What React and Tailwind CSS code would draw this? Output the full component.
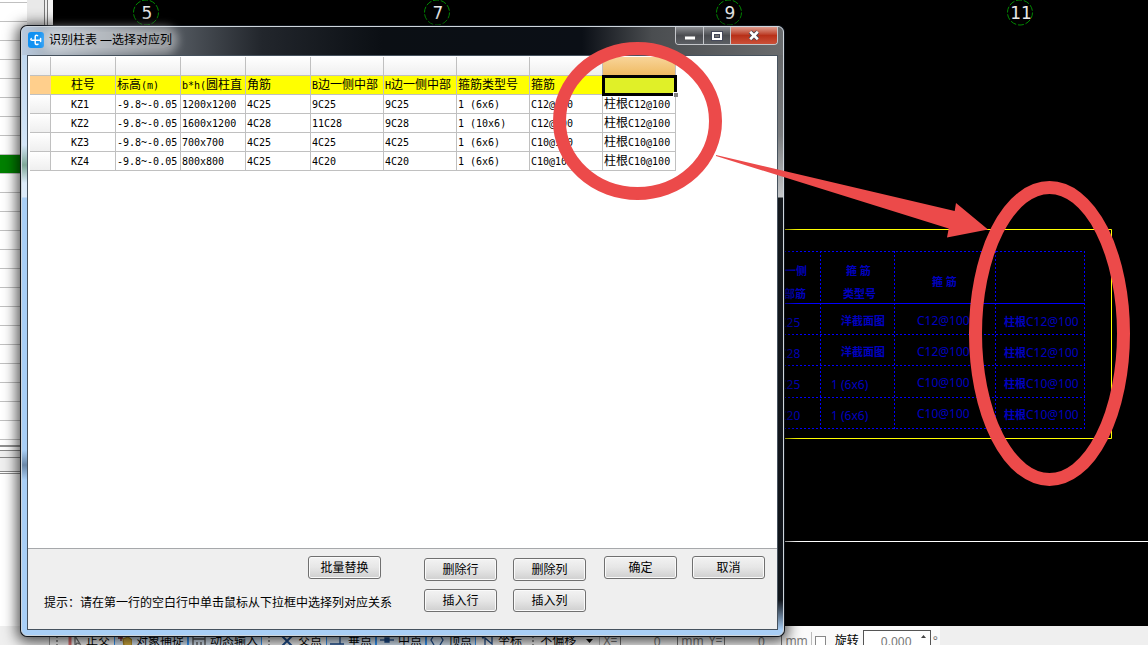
import { Fragment } from "react";
import clsx from "clsx";

const header = ["柱号", "标高(m)", "b*h(圆柱直", "角筋", "B边一侧中部", "H边一侧中部", "箍筋类型号", "箍筋", ""];

const rows = [
  ["KZ1", "-9.8~-0.05", "1200x1200", "4C25", "9C25", "9C25", "1 (6x6)", "C12@100", "柱根C12@100"],
  ["KZ2", "-9.8~-0.05", "1600x1200", "4C28", "11C28", "9C28", "1 (10x6)", "C12@100", "柱根C12@100"],
  ["KZ3", "-9.8~-0.05", "700x700", "4C25", "4C25", "4C25", "1 (6x6)", "C10@100", "柱根C10@100"],
  ["KZ4", "-9.8~-0.05", "800x800", "4C25", "4C20", "4C20", "1 (6x6)", "C10@100", "柱根C10@100"],
];

const axes = [
  { x: 146, label: "5" },
  { x: 437, label: "7" },
  { x: 729, label: "9" },
  { x: 1020, label: "11" },
];

const drawingRows = [
  { y: 326, left: "C25", type: "洋截面图", bar: "C12@100" },
  { y: 357, left: "C28", type: "洋截面图", bar: "C12@100" },
  { y: 388, left: "C25", type: "1 (6x6)", bar: "C10@100" },
  { y: 419, left: "C20", type: "1 (6x6)", bar: "C10@100" },
];

// latin runs are half the width of a chinese character, like in the old raster fonts
function GridText({ children }) {
  return children.split(/([\x20-\x7e]+)/).map((part, i) =>
    i % 2 ? (
      <span key={i} className="font-['DejaVu_Sans_Mono',monospace] text-[10px] leading-none">{part}</span>
    ) : (
      <Fragment key={i}>{part}</Fragment>
    )
  );
}

function ListPanel() {
  return (
    <aside className="flex w-[53px] shrink-0 flex-col bg-white">
      <div className="flex h-[450px]">
        <div className="flex w-[27px] flex-col overflow-hidden">
          <div className="h-[3px] shrink-0 border-b border-[#c0c0c0]" />
          {Array.from({ length: 23 }, (_, i) => (
            <div key={i} className={clsx("h-[19px] shrink-0 border-b border-[#c0c0c0]", i === 8 && "bg-[#008000]")} />
          ))}
          <div className="h-[7px] border-b-2 border-[#909090]" />
        </div>
        <div className="w-[17px] bg-[#e9e9e9]" />
        <div className="w-[4px] border-x border-[#777] bg-[#eee]" />
        <div className="flex-1 bg-[#f4f4f4]" />
      </div>
      <div className="h-[8px] border-y border-[#888] bg-[#efefef]" />
      <div className="h-[14px] border-b border-[#888] bg-[#efefef]" />
      <div className="h-[2px] border-b border-[#888]" />
    </aside>
  );
}

function Drawing() {
  return (
    <svg width="1095" height="626" viewBox="53 0 1095 626" className="shrink-0 font-['Noto_Sans','Noto_Sans_CJK_SC',sans-serif]">
      {axes.map((a) => (
        <g key={a.label}>
          <circle cx={a.x} cy="12.5" r="12.5" fill="none" stroke="#008a00" strokeDasharray="6 1.8" />
          <text x={a.x + 1} y="19" textAnchor="middle" fill="#e8e8e8" className="font-['DejaVu_Sans',sans-serif] text-[17px]">{a.label}</text>
        </g>
      ))}
      <path d="M700 229.5H1111.5V438.5H700" fill="none" stroke="#ffff00" />
      <path d="M700 541.5H1148" stroke="#ffffff" />
      <g stroke="#0000ff" strokeDasharray="2 2" fill="none">
        <path d="M700 251.5H1085M700 334.5H1085M700 365.5H1085M700 397.5H1085M700 428.5H1085" />
        <path d="M820.5 251V429M894.5 251V429M995.5 251V429M1084.5 251V429" />
      </g>
      <path d="M700 303.5H1085" stroke="#0000ff" />
      <g fill="#0000c0" className="text-[12px]">
        <g className="text-[11px] font-bold">
          <text x="785" y="275">一侧</text>
          <text x="784" y="298">部筋</text>
          <text x="846" y="275">箍 筋</text>
          <text x="843" y="298">类型号</text>
          <text x="932" y="286">箍 筋</text>
        </g>
        {drawingRows.map((r) => (
          <g key={r.y}>
            <text x="779" y={r.y + 1}>{r.left}</text>
            {r.type.startsWith("1") ? (
              <text x="831" y={r.y + 1}>{r.type}</text>
            ) : (
              <text x="841" y={r.y - 1} className="text-[11px] font-bold">{r.type}</text>
            )}
            <text x="917" y={r.y - 1}>{r.bar}</text>
            <text x="1004" y={r.y}>
              <tspan className="text-[11px] font-bold">柱根</tspan>
              {r.bar}
            </text>
          </g>
        ))}
      </g>
    </svg>
  );
}

function Grip() {
  return <span className="mx-[6px] h-[16px] border-l-2 border-dotted border-[#999]" />;
}

function SnapButton({ label, active, children }) {
  return (
    <button
      className={clsx(
        "flex h-[24px] shrink-0 items-center gap-[4px] border px-[3px] whitespace-nowrap",
        active ? "border-[#3399ff] bg-[#dcebfa]" : "border-transparent"
      )}
    >
      <svg width="14" height="14" viewBox="0 0 14 14" fill="none" stroke="#1d4f91" strokeWidth="1.3" aria-hidden="true">
        {children}
      </svg>
      {label}
    </button>
  );
}

function StatusBar() {
  return (
    <div className="h-[19px] shrink-0 overflow-hidden bg-[#efefef] pl-[49px]">
      <div className="flex h-[30px] w-[891px] items-center border-l border-[#999] bg-[#fafafa] text-[12px] text-black">
        <Grip />
        <SnapButton label="正交">
          <path d="M2 0V14" stroke="#e07070" strokeWidth="3" />
          <path d="M7 2V12L9 9L12 10Z" fill="#fff" stroke="#777" />
        </SnapButton>
        <SnapButton label="对象捕捉" active>
          <path d="M0 4H5M3 1V7" stroke="#802020" />
          <path d="M5 5L10 3L14 6V12H6Z" fill="#d8b040" stroke="#b08820" />
        </SnapButton>
        <SnapButton label="动态输入" active>
          <path d="M1 2H13V13H1ZM1 5H13M5 8V11M9 8V11" stroke="#555" />
        </SnapButton>
        <Grip />
        <SnapButton label="交点"><path d="M2 2L12 12M12 2L2 12" strokeWidth="2" /></SnapButton>
        <SnapButton label="垂点" active><path d="M10 1V10M0 10H14" /></SnapButton>
        <SnapButton label="中点" active>
          <path d="M0 6H14" />
          <path d="M5 4H9V8H5Z" fill="#1d4f91" />
        </SnapButton>
        <SnapButton label="顶点" active><path d="M4 1L1 6L4 11M10 1L13 6L10 11" /></SnapButton>
        <SnapButton label="坐标"><path d="M1 1L3 4L5 1M5 11V4L12 10V3" /></SnapButton>
        <Grip />
        <button className="flex items-center gap-[10px] whitespace-nowrap">
          不偏移
          <svg width="7" height="4" aria-hidden="true"><path d="M0 0H7L3.5 4Z" /></svg>
        </button>
        <div className="ml-auto flex shrink-0 items-center text-[#777]">
          <label htmlFor="offset-x" className="border-l border-[#bbb] px-[3px]">X=</label>
          <input id="offset-x" defaultValue="0" className="h-[24px] w-[58px] border border-[#777] pl-[16px] text-center" />
          <span className="mx-[3px]">mm</span>
          <label htmlFor="offset-y" className="px-[2px]">Y=</label>
          <input id="offset-y" defaultValue="0" className="h-[24px] w-[58px] border border-[#777] pl-[16px] text-center" />
          <span className="mx-[3px]">mm</span>
          <label className="flex items-center border-l border-[#bbb] pl-[3px] text-black">
            <input type="checkbox" className="mr-[9px] size-[11px] appearance-none border border-[#888] bg-white" />
            旋转
          </label>
          <span className="relative ml-[4px]">
            <input aria-label="旋转" defaultValue="0.000" className="h-[22px] w-[68px] border border-[#555] bg-white pl-[17px] text-left" />
            <svg width="5" height="3" className="absolute top-[5px] right-[5px]" aria-hidden="true"><path d="M0 3H5L2.5 0Z" fill="#444" /></svg>
          </span>
          <span className="mr-[2px] ml-[2px]">°</span>
        </div>
      </div>
    </div>
  );
}

function TitleBar() {
  return (
    <div className="flex h-[28px] items-start justify-between">
      <div className="flex items-center pt-[5px] pl-[6px]">
        <svg width="16" height="16" viewBox="0 0 16 16" aria-hidden="true">
          <rect width="16" height="16" rx="3" fill="#1191f2" />
          <path
            d="M9.6 3.6C8.2 2.8 7.2 3.6 7.2 5V11C7.2 12.6 8.8 13 10 12.2M3.2 6.6C2.4 7.6 3 8.2 4.4 8.2H12.6M12.6 6.6V9.6"
            fill="none"
            stroke="#fff"
            strokeWidth="1.5"
            strokeLinecap="round"
          />
        </svg>
        <h1 className="ml-[5px] rounded-full bg-white/40 text-[12px] leading-[16px] text-black shadow-[0_0_8px_6px_rgba(255,255,255,0.4)]">
          识别柱表 —选择对应列
        </h1>
      </div>
      <div className="mr-[5px] flex h-[18px] overflow-hidden rounded-b-[4px] border border-t-0 border-[#c4c6ca]">
        <button aria-label="最小化" className="flex w-[28px] items-center justify-center border-r border-[#c4c6ca] bg-linear-to-b from-[#8c8e92] via-[#4a4c50] via-50% to-[#5c5f64]">
          <svg width="12" height="12" viewBox="0 0 12 12" aria-hidden="true">
            <rect x="0.5" y="6" width="11" height="4" fill="#fff" stroke="#55565a" />
          </svg>
        </button>
        <button aria-label="最大化" className="flex w-[27px] items-center justify-center border-r border-[#c4c6ca] bg-linear-to-b from-[#8c8e92] via-[#4a4c50] via-50% to-[#5c5f64]">
          <svg width="12" height="10" viewBox="0 0 12 10" aria-hidden="true">
            <rect x="0.5" y="0.5" width="11" height="9" fill="#fff" stroke="#44485a" />
            <rect x="3.5" y="3.5" width="5" height="3" fill="#777" stroke="#44485a" />
          </svg>
        </button>
        <button aria-label="关闭" className="flex w-[46px] items-center justify-center bg-linear-to-b from-[#dc9a8c] via-[#b83018] via-50% to-[#cb5038]">
          <svg width="12" height="11" viewBox="0 0 12 11" aria-hidden="true">
            <path d="M2.2 1.8L9.8 9.2M9.8 1.8L2.2 9.2" stroke="#4a4450" strokeWidth="4.4" />
            <path d="M2.2 1.8L9.8 9.2M9.8 1.8L2.2 9.2" stroke="#fff" strokeWidth="2.6" />
          </svg>
        </button>
      </div>
    </div>
  );
}

function ColumnGrid() {
  return (
    <div className="h-[493px] border-b border-[#a6a8ab] bg-white pt-px pl-[2px]">
      <table className="w-[646px] table-fixed border-separate border-spacing-0 text-[12px] leading-[16px] text-black">
        <colgroup>
          <col className="w-[21px]" />
          {header.map((_, i) => (
            <col key={i} className={i < 4 ? "w-[65px]" : "w-[73px]"} />
          ))}
        </colgroup>
        <thead>
          <tr className="h-[19px]">
            {[null, ...header].map((_, i) => (
              <td
                key={i}
                className={clsx(
                  "border-r border-b border-[#c0c0c0] bg-linear-to-b",
                  i === 9 ? "from-[#f8d498] to-[#efbb62]" : "from-white to-[#efefef]"
                )}
              />
            ))}
          </tr>
          <tr className="h-[19px]">
            <td className="border-b border-[#c0c0c0] bg-[#ffcf8c]" />
            {header.map((text, i) => (
              <th
                key={i}
                className={clsx(
                  "border-r border-b border-[#c0c0c0] p-0 font-normal whitespace-nowrap",
                  i === 0 ? "text-center" : "pl-px text-left",
                  i === 8 ? "relative bg-[#e0f028] outline-3 -outline-offset-2 outline-black" : "overflow-hidden bg-[#ffff00]"
                )}
              >
                <GridText>{text}</GridText>
                {i === 8 && <span className="absolute -right-[3px] -bottom-[3px] size-[5px] border-t border-l border-white bg-[#808080]" />}
              </th>
            ))}
          </tr>
        </thead>
        <tbody>
          {rows.map((row) => (
            <tr key={row[0]} className="h-[19px]">
              <td className="border-r border-b border-[#c0c0c0] bg-linear-to-b from-white to-[#efefef]" />
              {row.map((text, i) => (
                <td
                  key={i}
                  className={clsx(
                    "overflow-hidden border-r border-b border-[#c0c0c0] p-0 whitespace-nowrap",
                    i === 0 ? "pr-[6px] text-center" : "pl-px"
                  )}
                >
                  <GridText>{text}</GridText>
                </td>
              ))}
            </tr>
          ))}
        </tbody>
      </table>
    </div>
  );
}

function Button({ children, className }) {
  return (
    <button
      className={clsx(
        "h-[23px] w-[73px] shrink-0 rounded-[3px] border border-[#707070] bg-linear-to-b from-[#f3f3f3] via-[#e6e6e6] via-50% to-[#cfcfcf] text-[12px] leading-[20px] text-black shadow-[inset_0_0_0_1px_#fafafa]",
        className
      )}
    >
      {children}
    </button>
  );
}

function Dialog() {
  return (
    <section
      role="dialog"
      aria-label="识别柱表"
      className="absolute top-[26px] left-[21px] flex w-[763px] flex-col rounded-[6px] border border-[#cfd6dc] bg-[#a9cff6] bg-[linear-gradient(90deg,#b9cbe0_0px,#a9b4c0_24px,#5b6168_140px,#22262c_240px,#0b0f14_360px,#0b0f16_560px,#4a4d50_630px,#6a6c6e_763px)] bg-size-[100%_29px] bg-no-repeat shadow-[0_0_0_1px_#10151c,0_2px_14px_4px_rgba(0,0,0,0.7)]"
    >
      <TitleBar />
      <div className="flex">
        <div className="w-[5px] shrink-0 bg-[linear-gradient(#c0d8f0_0px,#d4e6f8_90px,#7fa898_110px,#dcebfa_128px,#dcebfa_142px,#a9cff6_143px,#a9cff6_395px,#6b88a8_410px,#a9cff6_425px)]" />
        <div className="min-w-0 flex-1 border border-[#46525e] bg-[#efefef]">
          <ColumnGrid />
          <div className="flex h-[80px] items-start pt-[7px] pl-[16px]">
            <div className="flex w-[348px] shrink-0 flex-col">
              <Button className="mr-[11px] self-end">批量替换</Button>
              <p className="mt-[15px] text-[12px] leading-[18px] whitespace-nowrap text-black">
                提示：请在第一行的空白行中单击鼠标从下拉框中选择列对应关系
              </p>
            </div>
            <div className="mt-[2px] ml-[32px] grid shrink-0 grid-cols-2 gap-x-[16px] gap-y-[8px]">
              <Button>删除行</Button>
              <Button>删除列</Button>
              <Button>插入行</Button>
              <Button>插入列</Button>
            </div>
            <div className="ml-[18px] flex gap-[15px]">
              <Button>确定</Button>
              <Button>取消</Button>
            </div>
          </div>
        </div>
        <div className="w-[5px] shrink-0 bg-[linear-gradient(#66686a_0px,#7a7c7e_80px,#c4c6c8_142px,#14181c_143px,#10141a_545px,#a9cff6_575px)]" />
      </div>
      <div className="h-[5px]" />
    </section>
  );
}

function Annotations() {
  return (
    <svg width="1148" height="645" viewBox="0 0 1148 645" className="pointer-events-none absolute top-0 left-0" aria-hidden="true">
      <g fill="none" stroke="#ec4a4a" strokeWidth="13">
        <ellipse cx="637.5" cy="121" rx="78" ry="72.5" />
        <ellipse cx="1049.5" cy="333.5" rx="74" ry="146" />
      </g>
      <path d="M716 155L954.7 211L956 203L988 229.5L947 237.5L948.7 228.5L716 156Z" fill="#ec4a4a" />
    </svg>
  );
}

export default function App() {
  return (
    <main className="relative flex h-screen flex-col overflow-hidden bg-white font-['Noto_Sans','Noto_Sans_CJK_SC',sans-serif]">
      <div className="flex min-h-0 flex-1">
        <ListPanel />
        <div className="flex min-w-0 flex-1 overflow-hidden bg-black">
          <Drawing />
        </div>
      </div>
      <StatusBar />
      <Dialog />
      <Annotations />
    </main>
  );
}
